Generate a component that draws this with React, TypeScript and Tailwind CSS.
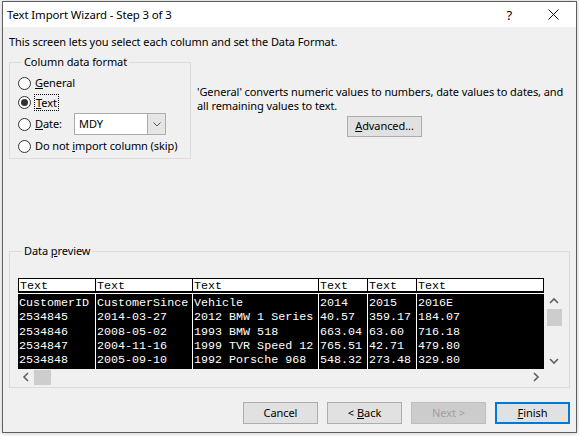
import React from "react";

const Radio = ({ checked }: { checked?: boolean }) => (
  <span className="w-[13px] h-[13px] rounded-full border border-[#333333] bg-white flex items-center justify-center shrink-0">
    {checked && <span className="w-[7px] h-[7px] rounded-full bg-[#333333]" />}
  </span>
);

const Btn = ({ children, disabled, focused }: { children: React.ReactNode; disabled?: boolean; focused?: boolean }) => (
  <div
    className={
      "w-[75px] h-[22px] flex items-center justify-center " +
      (disabled
        ? "bg-[#cccccc] border border-[#bfbfbf] text-[#a0a0a0]"
        : focused
        ? "bg-[#e1e1e1] border-2 border-[#0078d7] text-black"
        : "bg-[#e1e1e1] border border-[#adadad] text-black")
    }
  >
    {children}
  </div>
);

const cols = [
  { w: 78, rows: ["CustomerID", "2534845", "2534846", "2534847", "2534848"] },
  { w: 97, rows: ["CustomerSince", "2014-03-27", "2008-05-02", "2004-11-16", "2005-09-10"] },
  { w: 126, rows: ["Vehicle", "2012 BMW 1 Series", "1993 BMW 518", "1999 TVR Speed 12", "1992 Porsche 968"] },
  { w: 49, rows: ["2014", "40.57", "663.04", "765.51", "548.32"] },
  { w: 49, rows: ["2015", "359.17", "63.60", "42.71", "273.48"] },
  { w: 125, rows: ["2016E", "184.07", "716.18", "479.80", "329.80"] },
];

const Chevron = ({ dir }: { dir: "up" | "down" | "left" | "right" }) => {
  const d =
    dir === "up"
      ? "M1 6 L5 2 L9 6"
      : dir === "down"
      ? "M1 2 L5 6 L9 2"
      : dir === "left"
      ? "M6 1 L2 5 L6 9"
      : "M2 1 L6 5 L2 9";
  const w = dir === "up" || dir === "down" ? 10 : 8;
  const h = dir === "up" || dir === "down" ? 8 : 10;
  return (
    <svg width={w} height={h} viewBox={`0 0 ${w} ${h}`}>
      <path d={d} fill="none" stroke="#606060" strokeWidth="1.6" />
    </svg>
  );
};

export default function App() {
  return (
    <div className="w-[579px] h-[436px] bg-white overflow-hidden font-['Noto_Sans',sans-serif] text-[11px] tracking-[-0.08px] text-black">
      <div className="ml-[2px] mt-[1px] w-[575px] h-[432px] border border-[#5f5f5f] bg-[#f0f0f0] flex flex-col shadow-[0_0_6px_rgba(0,0,0,0.25)]">
        {/* Title bar */}
        <div className="h-[25px] bg-white flex items-center shrink-0">
          <span className="ml-[4px] text-[11.4px] tracking-[-0.1px] leading-[16px]">Text Import Wizard - Step 3 of 3</span>
          <span className="ml-auto text-[13px] leading-[16px] mr-[36px]">?</span>
          <svg width="11" height="11" viewBox="0 0 11 11" className="mr-[17px]">
            <path d="M0.5 0.5 L10.5 10.5 M10.5 0.5 L0.5 10.5" stroke="#111" strokeWidth="1" />
          </svg>
        </div>

        <div className="px-[6px] flex flex-col">
          <div className="mt-[7px] h-[16px] leading-[16px] whitespace-nowrap">
            This screen lets you select each column and set the Data Format.
          </div>

          <div className="mt-[4px] flex">
            <fieldset className="w-[182px] border border-[#dcdcdc] pl-[8px] pt-[4px] pb-[1px] whitespace-nowrap">
              <legend className="ml-[4px] px-[2px] leading-[16px]">Column data format</legend>
              <div className="h-[19px] flex items-center gap-[4px]">
                <Radio />
                <span>
                  <u>G</u>eneral
                </span>
              </div>
              <div className="h-[19px] flex items-center gap-[3px]">
                <Radio checked />
                <span className="border border-dotted border-black px-[1px] leading-[15px]">
                  <u>T</u>ext
                </span>
              </div>
              <div className="mt-[1px] h-[22px] flex items-center">
                <Radio />
                <span className="ml-[4px] w-[39px]">
                  <u>D</u>ate:
                </span>
                <div className="w-[92px] h-[22px] border border-[#acacac] bg-white flex items-center">
                  <span className="pl-[4px] flex-1">MDY</span>
                  <div className="w-[18px] h-full bg-[#e5e5e5] border-l border-[#acacac] flex items-center justify-center">
                    <svg width="8" height="5" viewBox="0 0 8 5">
                      <path d="M0.5 0.5 L4 4 L7.5 0.5" fill="none" stroke="#555" strokeWidth="1" />
                    </svg>
                  </div>
                </div>
              </div>
              <div className="h-[22px] flex items-center gap-[4px]">
                <Radio />
                <span>
                  Do not <u>i</u>mport column (skip)
                </span>
              </div>
            </fieldset>

            <div className="ml-[6px] pt-[31px] flex flex-col">
              <div className="leading-[14px] whitespace-nowrap">
                'General' converts numeric values to numbers, date values to dates, and
                <br />
                all remaining values to text.
              </div>
              <div className="mt-[3px] ml-[150px] w-[75px] h-[21px] bg-[#e1e1e1] border border-[#adadad] flex items-center justify-center">
                <span>
                  <u>A</u>dvanced...
                </span>
              </div>
            </div>
          </div>

          <fieldset className="mt-[84px] border border-[#dcdcdc] pl-[8px] pb-[2px]">
            <legend className="ml-[4px] px-[2px] leading-[16px]">
              Data <u>p</u>review
            </legend>
            <div className="mt-[19px] flex font-['Liberation_Mono',monospace] text-[11.7px] tracking-normal">
              <div className="w-[526px] flex flex-col">
                <div className="h-[15px] bg-white border-t border-l border-r border-black border-b-2 flex">
                  {cols.map((c, i) => (
                    <div
                      key={i}
                      style={{ width: i === 0 ? c.w - 1 : c.w }}
                      className={"h-full pl-[1px] leading-[14px] " + (i < cols.length - 1 ? "border-r border-black" : "")}
                    >
                      Text
                    </div>
                  ))}
                </div>
                <div className="h-[76px] bg-black border-t border-white flex overflow-hidden">
                  {cols.map((c, i) => (
                    <div
                      key={i}
                      style={{ width: c.w }}
                      className={"h-full pt-[2px] pl-[1px] text-white " + (i < cols.length - 1 ? "border-r border-white" : "")}
                    >
                      {c.rows.map((r, j) => (
                        <div key={j} className="h-[14.25px] leading-[14px] whitespace-pre">
                          {r}
                        </div>
                      ))}
                    </div>
                  ))}
                </div>
                <div className="h-[16px] flex items-center">
                  <div className="w-[16px] flex justify-center">
                    <Chevron dir="left" />
                  </div>
                  <div className="w-[17px] h-[15px] bg-[#cdcdcd]" />
                  <div className="flex-1" />
                  <div className="w-[16px] flex justify-center">
                    <Chevron dir="right" />
                  </div>
                </div>
              </div>
              <div className="ml-[2px] mt-[15px] w-[16px] h-[76px] flex flex-col items-center">
                <div className="h-[16px] flex items-center justify-center">
                  <Chevron dir="up" />
                </div>
                <div className="w-[15px] h-[17px] bg-[#cdcdcd]" />
                <div className="flex-1" />
                <div className="h-[16px] flex items-center justify-center">
                  <Chevron dir="down" />
                </div>
              </div>
            </div>
          </fieldset>

          <div className="mt-[14px] flex justify-end gap-[9px]">
            <Btn>Cancel</Btn>
            <Btn>
              &lt; <u className="ml-[3px]">B</u>ack
            </Btn>
            <Btn disabled>Next &gt;</Btn>
            <Btn focused>
              <u>F</u>inish
            </Btn>
          </div>
        </div>
      </div>
    </div>
  );
}
